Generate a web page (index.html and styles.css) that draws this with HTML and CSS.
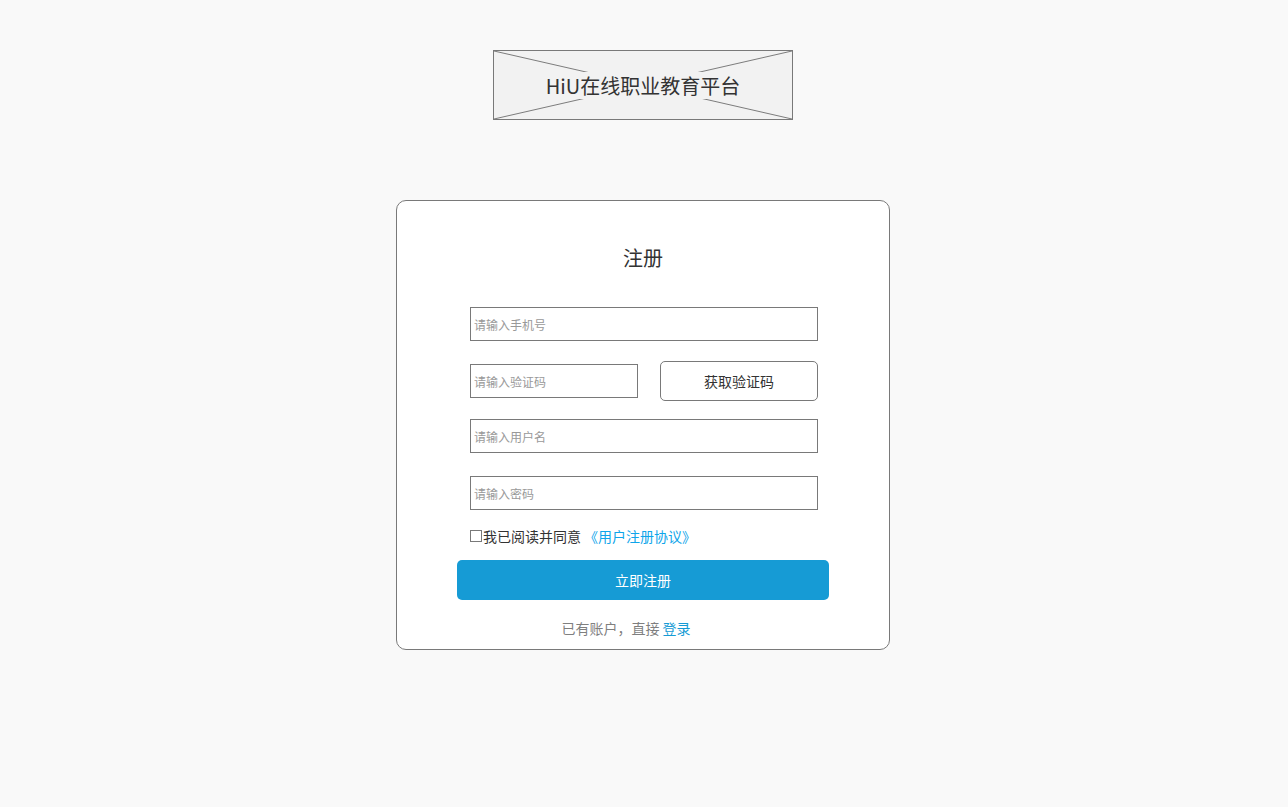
FILE: index.html
```html
<!doctype html>
<html lang="zh-CN">

<head>
    <meta charset="utf-8">
    <meta name="viewport" content="width=device-width, initial-scale=1.0">
    <title>注册 - HiU在线职业教育平台</title>
    <link rel="stylesheet" href="styles.css">
</head>

<body>
    <div id="page">
        <!-- Logo 占位 -->
        <div id="logo">
            <svg class="logo-cross" viewBox="0 0 300 70" preserveAspectRatio="none">
                <line x1="0" y1="0" x2="300" y2="70" />
                <line x1="300" y1="0" x2="0" y2="70" />
            </svg>
            <span class="logo-text">HiU在线职业教育平台</span>
        </div>

        <div id="register-box">
            <h2>注册</h2>

            <form id="register-form" onsubmit="return false;">
                <input class="field" type="text" placeholder="请输入手机号">

                <div class="code-row">
                    <input class="field field-code" type="text" placeholder="请输入验证码">
                    <button type="button" class="code-button">获取验证码</button>
                </div>

                <input class="field field-user" type="text" placeholder="请输入用户名">
                <input class="field field-pass" type="password" placeholder="请输入密码">

                <label class="agree">
                    <span class="check"></span>我已阅读并同意 <a href="#">《用户注册协议》</a>
                </label>
            </form>

            <button type="button" id="submit-button">立即注册</button>

            <div class="login-tip">已有账户，直接 <a href="#">登录</a></div>
        </div>
    </div>
</body>

</html>
```

FILE: styles.css
```css
body {
    background-color: #f9f9f9;
    color: #333;
    font-family: 'Noto Sans CJK SC', 'Liberation Sans', sans-serif;
    margin: 0;
}

#page {
    display: flex;
    flex-direction: column;
    align-items: center;
    padding-top: 50px;
    padding-right: 2px;
}

/***** logo *****/
#logo {
    position: relative;
    width: 300px;
    height: 70px;
    box-sizing: border-box;
    border: 1px solid #797979;
    background-color: #f2f2f2;
    display: flex;
    align-items: center;
    justify-content: center;
}

.logo-cross {
    position: absolute;
    top: 0;
    left: 0;
    width: 100%;
    height: 100%;
}

.logo-cross line {
    stroke: #797979;
    stroke-width: 1;
}

.logo-text {
    position: relative;
    background-color: #f2f2f2;
    font-size: 20px;
    line-height: 27px;
    color: #333;
    padding: 0 1px;
}

/***** boite d'inscription *****/
#register-box {
    margin-top: 80px;
    width: 494px;
    box-sizing: border-box;
    border: 1px solid #797979;
    border-radius: 10px;
    background-color: #fff;
    padding: 43px 0 11px;
    display: flex;
    flex-direction: column;
    align-items: center;
}

#register-box h2 {
    margin: 0;
    font-size: 20px;
    font-weight: normal;
    line-height: 28px;
    color: #333;
}

#register-form {
    width: 348px;
    margin-top: 35px;
    margin-left: 2px;
    display: flex;
    flex-direction: column;
}

.field {
    height: 34px;
    box-sizing: border-box;
    border: 1px solid #797979;
    border-radius: 0;
    padding: 0 3px;
    margin: 0;
    font-family: inherit;
    font-size: 12px;
    color: #333;
    background: #fff;
    outline: none;
}

.field::placeholder {
    color: #999;
}

.code-row {
    display: flex;
    justify-content: space-between;
    align-items: center;
    margin-top: 20px;
}

.field-code {
    width: 168px;
}

.code-button {
    width: 158px;
    height: 40px;
    border: 1px solid #797979;
    border-radius: 5px;
    background: #fff;
    font-family: inherit;
    font-size: 14px;
    color: #333;
    cursor: pointer;
}

.field-user {
    margin-top: 18px;
}

.field-pass {
    margin-top: 23px;
}

.agree {
    display: flex;
    align-items: center;
    margin-top: 16px;
    font-size: 14px;
    line-height: 20px;
    color: #333;
}

.check {
    width: 12px;
    height: 12px;
    box-sizing: border-box;
    border: 1px solid #797979;
    background: #fff;
    margin-right: 1px;
}

.agree a {
    color: #0ea5ea;
    text-decoration: none;
    margin-left: 3px;
}

#submit-button {
    margin-top: 14px;
    width: 372px;
    height: 40px;
    border: none;
    border-radius: 5px;
    background-color: #169bd5;
    color: #fff;
    font-family: inherit;
    font-size: 14px;
    cursor: pointer;
}

.login-tip {
    margin-top: 18px;
    margin-right: 34px;
    font-size: 14px;
    line-height: 20px;
    color: #7f7f7f;
}

.login-tip a {
    color: #169bd5;
    text-decoration: none;
}
```
